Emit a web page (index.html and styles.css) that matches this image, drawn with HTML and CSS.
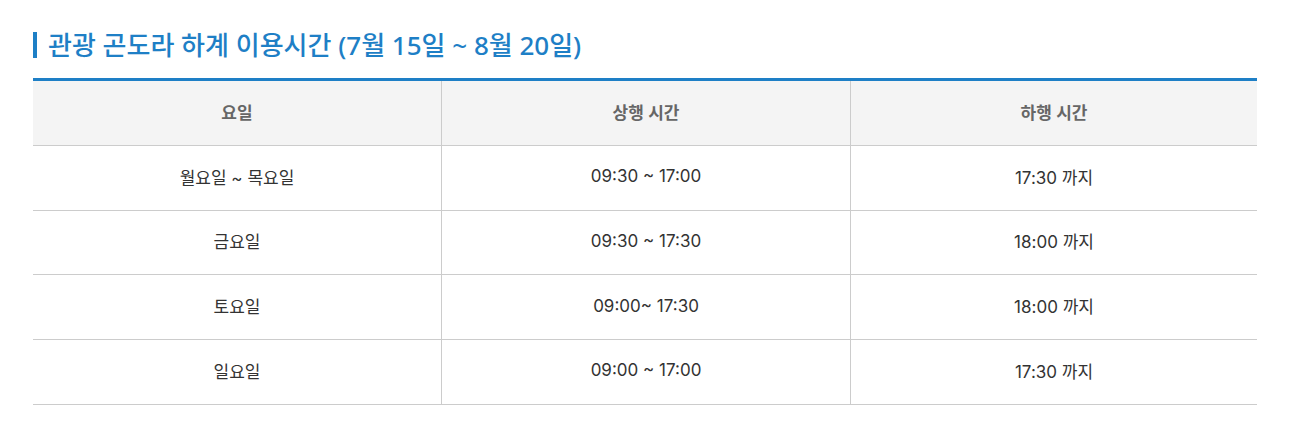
FILE: index.html
```html
<!DOCTYPE html>
<html lang="ko">
<head>
<meta charset="utf-8">
<link rel="stylesheet" href="styles.css">
</head>
<body>
<div class="wrap">
  <h2 class="title">관광 곤도라 하계 이용시간 (7월 15일 ~ 8월 20일)</h2>
  <table class="tbl">
    <thead>
      <tr><th>요일</th><th>상행 시간</th><th>하행 시간</th></tr>
    </thead>
    <tbody>
      <tr><td>월요일 ~ 목요일</td><td>09:30 ~ 17:00</td><td>17:30 까지</td></tr>
      <tr><td>금요일</td><td>09:30 ~ 17:30</td><td>18:00 까지</td></tr>
      <tr><td>토요일</td><td>09:00~ 17:30</td><td>18:00 까지</td></tr>
      <tr><td>일요일</td><td>09:00 ~ 17:00</td><td>17:30 까지</td></tr>
    </tbody>
  </table>
</div>
</body>
</html>
```
FILE: styles.css
```css
html, body {
  margin: 0;
  padding: 0;
  background: #fff;
}
body {
  font-family: "Inter", "Noto Sans CJK KR", sans-serif;
  color: #333;
}
.wrap {
  padding: 32px 54px 0 33px;
}
.title {
  margin: 0 0 20px 0;
  font-family: "Noto Sans", "Noto Sans CJK KR", sans-serif;
  font-size: 26px;
  font-weight: 500;
  line-height: 26px;
  color: #1e7fc6;
  border-left: 4px solid #1e7fc6;
  padding-left: 11px;
}
.tbl {
  width: 1224px;
  border-collapse: collapse;
  border-top: 3px solid #1e7fc6;
  font-size: 17px;
}
.tbl th, .tbl td {
  height: 60.75px;
  text-align: center;
  vertical-align: middle;
  border-bottom: 1px solid #ccc;
  border-left: 1px solid #ccc;
  padding: 0 0 3px 0;
}
.tbl th:first-child, .tbl td:first-child {
  border-left: none;
}
.tbl th {
  background: #f4f4f4;
  color: #666;
  font-weight: 600;
}
.tbl td {
  color: #333;
}
.tbl th:nth-child(1), .tbl td:nth-child(1) { width: 408px; }
.tbl th:nth-child(2), .tbl td:nth-child(2) { width: 408px; }
```
